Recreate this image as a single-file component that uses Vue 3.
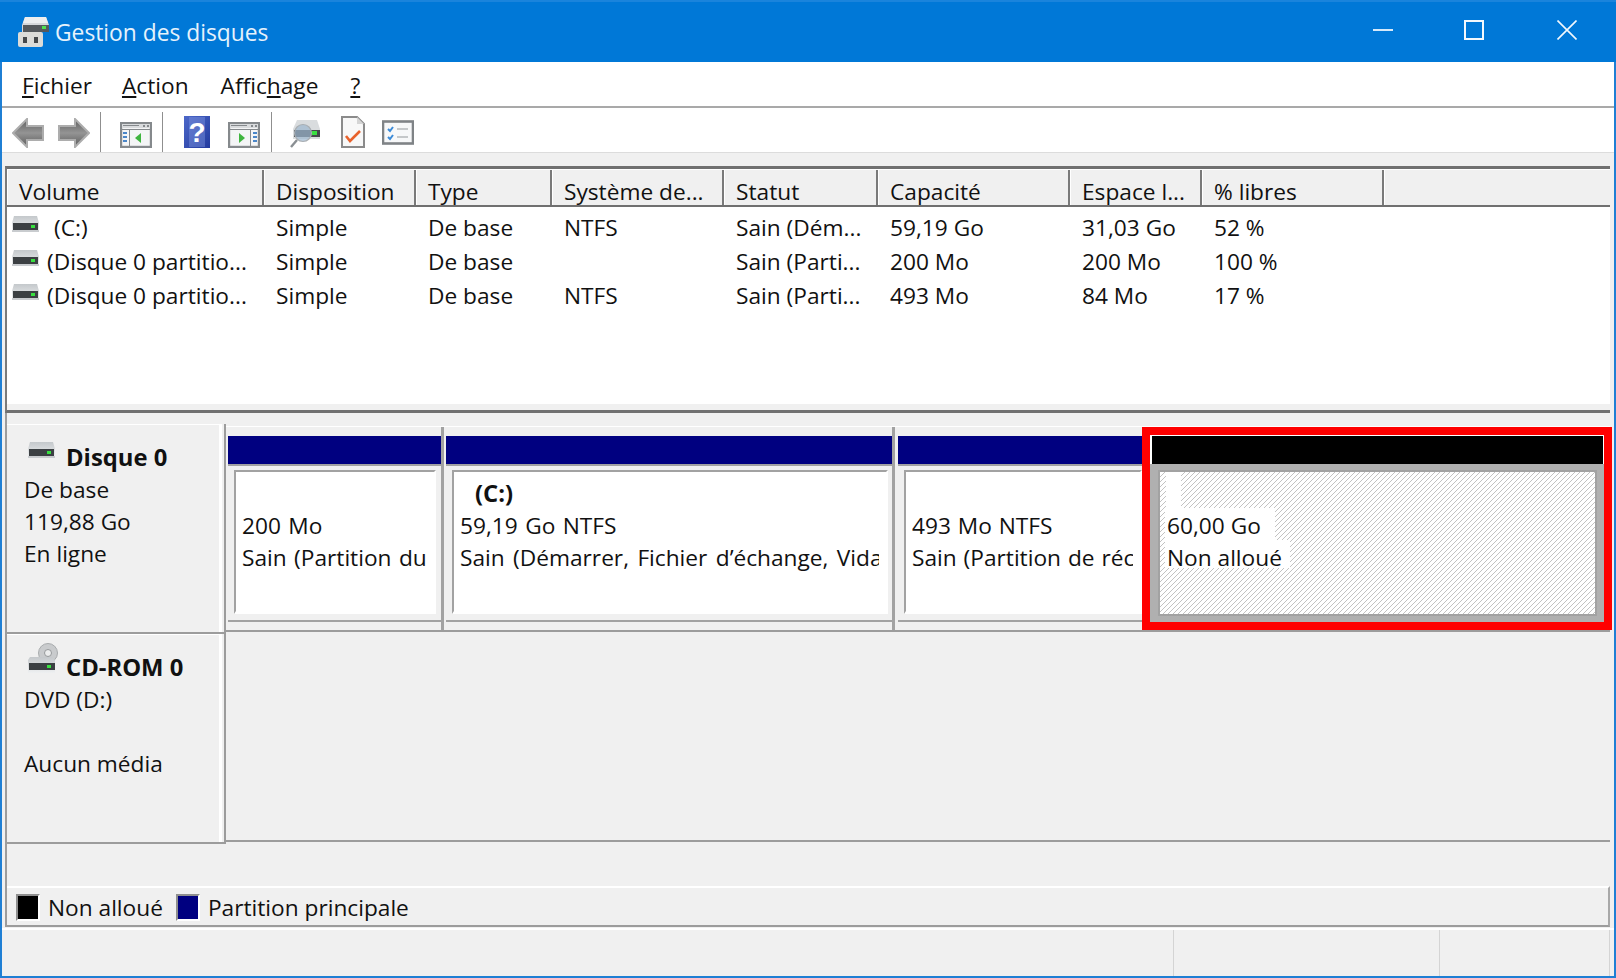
<template>
  <div class="window">
    <svg class="defs" width="0" height="0" aria-hidden="true">
      <defs>
        <linearGradient id="diskTop" x1="0" y1="0" x2="0" y2="1">
          <stop offset="0" stop-color="#c4c8cb" />
          <stop offset="1" stop-color="#eef0f1" />
        </linearGradient>
        <linearGradient id="arrowFill" x1="0" y1="0" x2="0" y2="1">
          <stop offset="0" stop-color="#5f5f5f" />
          <stop offset="0.5" stop-color="#949494" />
          <stop offset="1" stop-color="#5a5a5a" />
        </linearGradient>
        <linearGradient id="helpFill" x1="0" y1="0" x2="1" y2="1">
          <stop offset="0" stop-color="#4c68c9" />
          <stop offset="1" stop-color="#233a9e" />
        </linearGradient>
        <symbol id="disk" viewBox="0 0 27 17">
          <path d="M2 0h23l2 7v8H0V7z" fill="url(#diskTop)" />
          <rect x="1" y="7" width="25" height="7" fill="#3c4043" />
          <rect x="19" y="9" width="4" height="3" fill="#38e040" />
          <rect x="0" y="14" width="27" height="2" fill="#c9cccf" />
        </symbol>
        <symbol id="winPane" viewBox="0 0 32 26">
          <rect x="1" y="1" width="30" height="24" fill="#f4f5f6" stroke="#85898c" stroke-width="2.4" />
          <rect x="2" y="2" width="28" height="4" fill="#d9dbdd" />
          <rect x="3" y="3" width="16" height="1" fill="#85898c" />
          <rect x="23" y="3" width="2" height="2" fill="#85898c" />
          <rect x="27" y="3" width="2" height="2" fill="#85898c" />
          <rect x="2" y="7" width="28" height="1" fill="#85898c" />
        </symbol>
      </defs>
    </svg>

    <header class="titlebar">
      <svg class="app-icon" viewBox="0 0 32 31">
        <path d="M7 1h21l3 8v7H4V9z" fill="#d6d8da" />
        <path d="M7 1h21l2 6H5z" fill="#eceeef" />
        <rect x="5" y="9" width="26" height="7" fill="#55595c" />
        <rect x="24" y="10" width="4" height="3" fill="#4ee04e" />
        <rect x="0" y="16" width="25" height="15" rx="2" fill="#dcdcd8" />
        <rect x="5" y="21" width="4" height="6" fill="#45484a" />
        <rect x="16" y="21" width="4" height="6" fill="#45484a" />
      </svg>
      <span class="app-title">Gestion des disques</span>
      <div class="win-controls">
        <svg width="20" height="20" viewBox="0 0 20 20" class="ctl-min"><path d="M0 10h20" stroke="#d5e9fa" stroke-width="2" /></svg>
        <svg width="20" height="20" viewBox="0 0 20 20"><rect x="1" y="1" width="18" height="18" fill="none" stroke="#f2f8fd" stroke-width="2" /></svg>
        <svg width="20" height="20" viewBox="0 0 20 20"><path d="M0.5 0.5l19 19M19.5 0.5l-19 19" stroke="#f2f8fd" stroke-width="1.6" /></svg>
      </div>
    </header>

    <nav class="menubar">
      <span class="menu-item"><u>F</u>ichier</span>
      <span class="menu-item"><u>A</u>ction</span>
      <span class="menu-item">Affic<u>h</u>age</span>
      <span class="menu-item"><u>?</u></span>
    </nav>

    <div class="toolbar">
      <svg class="tool t-back" width="32" height="30" viewBox="0 0 32 30">
        <path d="M1 15L15 1v7h16v14H15v7z" fill="url(#arrowFill)" stroke="#adadad" stroke-width="2" />
      </svg>
      <svg class="tool t-fwd" width="32" height="30" viewBox="0 0 32 30">
        <path d="M31 15L17 1v7H1v14h16v7z" fill="url(#arrowFill)" stroke="#adadad" stroke-width="2" />
      </svg>
      <i class="tool-sep s1"></i>
      <svg class="tool t-pane1" width="32" height="26" viewBox="0 0 32 26">
        <use href="#winPane" width="32" height="26" />
        <rect x="9" y="8" width="1" height="16" fill="#85898c" />
        <path d="M3 11h4M3 15h4M3 19h4" stroke="#4a86c8" stroke-width="2" />
        <path d="M21 11v10l-6-5z" fill="#3fb53f" />
      </svg>
      <i class="tool-sep s2"></i>
      <svg class="tool t-help" width="26" height="32" viewBox="0 0 26 32">
        <rect width="26" height="32" fill="url(#helpFill)" />
        <rect x="5" y="1" width="16" height="30" fill="#7f95dd" opacity="0.45" />
        <text x="13" y="26" text-anchor="middle" class="help-mark">?</text>
      </svg>
      <svg class="tool t-pane2" width="32" height="26" viewBox="0 0 32 26">
        <use href="#winPane" width="32" height="26" />
        <rect x="22" y="8" width="1" height="16" fill="#85898c" />
        <path d="M25 11h4M25 15h4M25 19h4" stroke="#4a86c8" stroke-width="2" />
        <path d="M11 11v10l6-5z" fill="#3fb53f" />
      </svg>
      <i class="tool-sep s3"></i>
      <svg class="tool t-scan" width="31" height="28" viewBox="0 0 31 28">
        <path d="M7 0h20l3 9v10H3V9z" fill="#d9dcde" />
        <rect x="4" y="10" width="26" height="7" fill="#45494c" />
        <rect x="22" y="11" width="5" height="4" fill="#38e040" />
        <circle cx="13" cy="13" r="8.5" fill="#9db6cf" fill-opacity="0.7" stroke="#a9aeb2" stroke-width="1.2" />
        <path d="M7 20L1 27" stroke="#8a8f93" stroke-width="2.4" />
      </svg>
      <svg class="tool t-doc" width="24" height="32" viewBox="0 0 24 32">
        <path d="M1 1h15l7 7v23H1z" fill="#f8f8f8" stroke="#8b8b8b" stroke-width="2" />
        <path d="M16 1v7h7z" fill="#d5d5d5" />
        <path d="M5 20l4 5 10-10" fill="none" stroke="#e8622c" stroke-width="2.6" />
      </svg>
      <svg class="tool t-check" width="32" height="25" viewBox="0 0 32 25">
        <rect x="1" y="1.5" width="30" height="22" fill="#f7f8f9" stroke="#7f8386" stroke-width="2.6" />
        <path d="M6 9l2 2 3-4M6 17l2 2 3-4" fill="none" stroke="#3b8bd8" stroke-width="2" />
        <path d="M15 9h11M15 17h11" stroke="#b5b8ba" stroke-width="1.5" />
      </svg>
    </div>

    <div class="main">
      <section class="list">
        <div class="list-head">
          <div
            v-for="col in columns"
            :key="col.label"
            class="head-cell"
            :style="{ width: col.width + 'px' }"
          >{{ col.label }}</div>
          <div class="head-rest"></div>
        </div>
        <div class="list-body">
          <div v-for="(row, i) in rows" :key="i" class="list-row">
            <div
              v-for="(val, j) in row"
              :key="j"
              class="cell"
              :class="{ first: j === 0 }"
              :style="{ width: columns[j].width + 'px' }"
            >
              <svg v-if="j === 0" class="row-icon" width="27" height="17"><use href="#disk" /></svg>
              <span :class="{ 'c-name': j === 0 && i === 0 }">{{ val }}</span>
            </div>
          </div>
        </div>
        <div class="list-strip"></div>
      </section>

      <section class="graph">
        <div class="disk-row">
          <div class="disk-label">
            <div class="disk-name">
              <svg class="name-icon" width="27" height="17"><use href="#disk" /></svg>
              <b>Disque 0</b>
            </div>
            <div>De base</div>
            <div>119,88 Go</div>
            <div>En ligne</div>
          </div>
          <div class="disk-parts">
            <div class="part p1">
              <div class="bar"></div>
              <div class="part-body">
                <div class="box">
                  <div class="line">&nbsp;</div>
                  <div class="line">200 Mo</div>
                  <div class="line">Sain (Partition du</div>
                </div>
              </div>
            </div>
            <div class="part p2">
              <div class="bar"></div>
              <div class="part-body">
                <div class="box">
                  <div class="line vol">(C:)</div>
                  <div class="line">59,19 Go NTFS</div>
                  <div class="line long">Sain (Démarrer, Fichier d’échange, Vidage</div>
                </div>
              </div>
            </div>
            <div class="part p3">
              <div class="bar"></div>
              <div class="part-body">
                <div class="box">
                  <div class="line">&nbsp;</div>
                  <div class="line">493 Mo NTFS</div>
                  <div class="line">Sain (Partition de réc</div>
                </div>
              </div>
            </div>
            <div class="part-selected">
              <div class="bar black"></div>
              <div class="sel-body">
                <div class="hatch">
                  <div class="fill-gap"></div>
                  <div class="fill-line">60,00 Go</div>
                  <div class="fill-line short">Non alloué</div>
                </div>
              </div>
            </div>
          </div>
        </div>

        <div class="disk-row cd">
          <div class="disk-label">
            <div class="disk-name">
              <svg class="cd-icon" width="31" height="31" viewBox="0 0 31 31">
                <circle cx="20" cy="11" r="9.5" fill="#c9cbcd" stroke="#a8abad" />
                <circle cx="20" cy="11" r="3.5" fill="#eceded" stroke="#96999b" />
                <path d="M2 15h22l3 3v13H0V18z" fill="url(#diskTop)" />
                <rect x="1" y="21" width="26" height="7" fill="#3c4043" />
                <rect x="19" y="23" width="4" height="3" fill="#38e040" />
              </svg>
              <b>CD-ROM 0</b>
            </div>
            <div>DVD (D:)</div>
            <div>&nbsp;</div>
            <div>Aucun média</div>
          </div>
          <div class="disk-parts empty"></div>
        </div>

        <div class="filler"></div>

        <div class="legend">
          <i class="swatch"></i>
          <span class="legend-text">Non alloué</span>
          <i class="swatch navy"></i>
          <span class="legend-text">Partition principale</span>
        </div>
      </section>
    </div>

    <footer class="statusbar">
      <div class="status-cell grow"></div>
      <div class="status-cell wide"></div>
      <div class="status-cell last"></div>
    </footer>
  </div>
</template>

<script setup>
const columns = [
  { label: 'Volume', width: 257 },
  { label: 'Disposition', width: 152 },
  { label: 'Type', width: 136 },
  { label: 'Système de...', width: 172 },
  { label: 'Statut', width: 154 },
  { label: 'Capacité', width: 192 },
  { label: 'Espace l...', width: 132 },
  { label: '% libres', width: 182 }
]

const rows = [
  ['(C:)', 'Simple', 'De base', 'NTFS', 'Sain (Dém...', '59,19 Go', '31,03 Go', '52 %'],
  ['(Disque 0 partitio...', 'Simple', 'De base', '', 'Sain (Parti...', '200 Mo', '200 Mo', '100 %'],
  ['(Disque 0 partitio...', 'Simple', 'De base', 'NTFS', 'Sain (Parti...', '493 Mo', '84 Mo', '17 %']
]
</script>

<style>
html, body { margin: 0; background: #f0f0f0; overflow: hidden; }
</style>

<style scoped>
.window {
  width: 1616px;
  height: 978px;
  box-sizing: border-box;
  display: flex;
  flex-direction: column;
  background: #f0f0f0;
  border: solid #1f7fd4;
  border-width: 0 2px 2px;
  font-family: "Open Sans", "Noto Sans", sans-serif;
  font-size: 22.7px;
  color: #111;
  position: relative;
}

.defs { position: absolute; }

/* title bar */
.titlebar {
  height: 62px;
  margin: 0 -2px;
  flex: none;
  display: flex;
  align-items: center;
  background: #0078d7;
  border-top: 2px solid #1a84dc;
  box-sizing: border-box;
  position: relative;
}
.app-icon { width: 32px; height: 31px; margin-left: 18px; margin-top: -1px; }
.app-title { margin-left: 5px; color: #e6f2fc; font-size: 22.8px; }
.win-controls {
  margin-left: auto;
  display: flex;
  gap: 73px;
  margin-right: 39px;
  margin-top: -4px;
  align-items: center;
}
.ctl-min { margin-right: -2px; }

/* menu */
.menubar {
  height: 44px;
  flex: none;
  background: #fff;
  display: flex;
  align-items: center;
  padding: 2px 0 0 20px;
  box-sizing: border-box;
}
.menu-item { margin-right: 32px; }
.menu-item:first-child { margin-right: 30px; }

/* toolbar */
.toolbar {
  height: 47px;
  flex: none;
  box-sizing: border-box;
  display: flex;
  align-items: flex-start;
  background: #fff;
  border-top: 2px solid #a9a9a9;
  border-bottom: 1px solid #dcdcdc;
}
.tool { flex: none; }
.tool-sep { width: 1px; height: 40px; margin-top: 4px; background: #8f8f8f; flex: none; }
.t-back { margin: 10px 0 0 10px; }
.t-fwd { margin: 10px 0 0 14px; }
.s1 { margin-left: 10px; }
.t-pane1 { margin: 14px 0 0 19px; }
.s2 { margin-left: 10px; }
.t-help { margin: 8px 0 0 21px; }
.help-mark { font-size: 28px; font-weight: 700; fill: #fff; font-family: "Liberation Sans", sans-serif; }
.t-pane2 { margin: 14px 0 0 18px; }
.s3 { margin-left: 11px; }
.t-scan { margin: 12px 0 0 18px; }
.t-doc { margin: 8px 0 0 20px; }
.t-check { margin: 12px 0 0 17px; }

/* main */
.main {
  flex: 1;
  min-height: 0;
  display: flex;
  flex-direction: column;
  margin: 13px 4px 0 3px;
}

.list {
  flex: none;
  border-left: 2px solid #7a7a7a;
  border-top: 3px solid #707070;
  border-bottom: 3px solid #707070;
}
.list-head {
  height: 38px;
  box-sizing: border-box;
  display: flex;
  border-top: 1px solid #fff;
  border-bottom: 2px solid #707070;
  background: #f0f0f0;
}
.head-cell {
  flex: none;
  box-sizing: border-box;
  padding: 6px 0 0 12px;
  line-height: 31px;
  white-space: nowrap;
  border-right: 2px solid #7a7a7a;
  box-shadow: inset 1px 0 #fff;
}
.head-rest { flex: 1; box-shadow: inset 1px 0 #fff; }
.list-body {
  height: 195px;
  box-sizing: border-box;
  padding-top: 4px;
  background: #fff;
}
.list-row { display: flex; height: 34px; line-height: 34px; }
.cell {
  flex: none;
  box-sizing: border-box;
  padding-left: 12px;
  white-space: nowrap;
}
.cell.first { padding-left: 5px; display: flex; }
.row-icon { flex: none; margin-top: 5px; margin-right: 8px; }
.c-name { padding-left: 7px; }
.list-strip {
  height: 8px;
  box-sizing: border-box;
  background: #f0f0f0;
  border-top: 2px solid #fff;
}

/* graphical view */
.graph {
  flex: 1;
  min-height: 0;
  display: flex;
  flex-direction: column;
  padding-top: 11px;
  border-left: 2px solid #9c9c9c;
}

.disk-row {
  height: 210px;
  flex: none;
  display: flex;
}

.disk-label {
  width: 219px;
  flex: none;
  box-sizing: border-box;
  padding: 17px 0 0 17px;
  line-height: 32px;
  border-right: 2px solid #9c9c9c;
  border-bottom: 2px solid #9c9c9c;
  box-shadow: inset -2px 0 #f0f0f0, inset -5px 0 #fff, inset 0 1px #fff;
}
.disk-name { display: flex; align-items: flex-start; margin: 0 0 1px 4px; }
.disk-name b { font-size: 23.8px; }
.name-icon { margin: 1px 11px 0 0; }
.cd-icon { margin: -9px 7px 0 0; }

.disk-parts {
  flex: 1;
  min-width: 0;
  height: 206px;
  margin-top: 2px;
  box-sizing: border-box;
  display: flex;
  padding-left: 2px;
  border-top: 1px solid #fff;
  border-bottom: 2px solid #9c9c9c;
}
.disk-parts.empty { height: 208px; margin-top: 0; border-top: 0; }

.part {
  flex: none;
  display: flex;
  flex-direction: column;
  box-sizing: border-box;
  padding-top: 9px;
}
.p1 { width: 216px; margin-right: 2px; border-right: 3px solid #a2a2a2; }
.p2 { width: 449px; margin-right: 3px; border-right: 3px solid #a2a2a2; }
.p3 { width: 244px; }

.bar { height: 28px; background: #000080; flex: none; }
.bar.black { background: #000; margin: 1px 1px 0 2px; }

.part-body {
  height: 158px;
  flex: none;
  box-sizing: border-box;
  padding: 4px 5px 6px 6px;
  border-top: 2px solid #a2a2a2;
  border-bottom: 2px solid #a2a2a2;
}
.p2 .part-body { padding-right: 4px; }
.p3 .part-body { padding-right: 0; }

.box {
  height: 100%;
  box-sizing: border-box;
  padding: 6px 7px 0 6px;
  background: #fff;
  border: solid #a2a2a2;
  border-width: 2px 2px 3px 2px;
  border-right-color: #fff;
  border-bottom-color: #fff;
  line-height: 32px;
  word-spacing: 1.5px;
}
.p3 .box { word-spacing: 1px; }
.line { white-space: nowrap; overflow: hidden; }
.long { word-spacing: 2.5px; }
.vol {
  font-weight: 700;
  font-size: 23.8px;
  padding-left: 15px;
  margin: -1px 0 1px;
}

.part-selected {
  flex: none;
  width: 470px;
  margin-right: -2px;
  box-sizing: border-box;
  border: 8px solid #f00;
  background: #fff;
  display: flex;
  flex-direction: column;
}
.sel-body {
  flex: 1;
  min-height: 0;
  background: #b0b0b0;
  padding: 6px 7px 6px 8px;
}
.hatch {
  height: 100%;
  box-sizing: border-box;
  border: 2px solid #a2a2a2;
  background: #fff linear-gradient(135deg, #c2c2c2 0 9%, #fff 9% 50%, #c2c2c2 50% 59%, #fff 59%) 0 0 / 5px 5px;
}
.fill-gap { width: 15px; height: 36px; margin-left: 6px; background: #fff; }
.fill-line {
  width: fit-content;
  height: 32px;
  line-height: 36px;
  margin-left: 5px;
  padding: 0 14px 0 2px;
  background: #fff;
}
.fill-line.short { height: 28px; padding-right: 8px; }

.filler { flex: 1; min-height: 0; }

.legend {
  height: 41px;
  flex: none;
  box-sizing: border-box;
  display: flex;
  align-items: center;
  padding: 1px 0 0 9px;
  border-top: 2px solid #fff;
  border-bottom: 2px solid #9c9c9c;
  border-right: 2px solid #a8a8a8;
}
.swatch {
  width: 24px;
  height: 27px;
  flex: none;
  box-sizing: border-box;
  background: #000;
  border: 2px solid;
  border-color: #8f8f8f #fff #fff #8f8f8f;
}
.swatch.navy { background: #000080; }
.legend-text { margin: 0 13px 0 8px; }

.statusbar {
  height: 48px;
  flex: none;
  margin-top: 1px;
  box-sizing: border-box;
  border-top: 2px solid #fff;
  display: flex;
}
.status-cell { box-sizing: border-box; border-right: 1px solid #d4d4d4; }
.status-cell.grow { width: 1172px; }
.status-cell.wide { width: 266px; }
.status-cell.last { width: 170px; }
</style>
